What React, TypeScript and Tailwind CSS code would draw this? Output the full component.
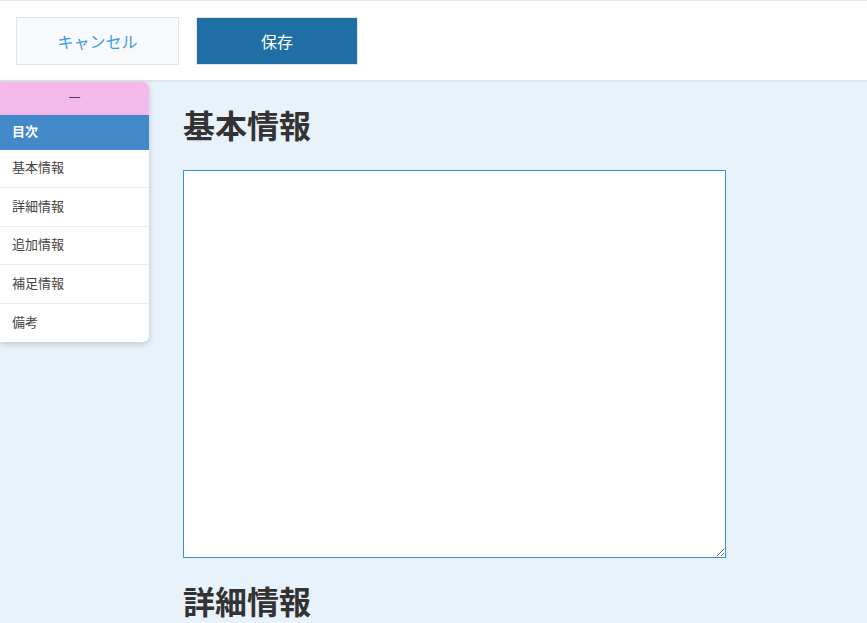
import React from "react";

const sections = ["基本情報", "詳細情報", "追加情報", "補足情報", "備考"];

export default function App() {
  return (
    <div
      className="relative h-[623px] w-[867px] overflow-hidden bg-[#e8f2fb]"
      style={{ fontFamily: '"Noto Sans CJK JP", "Noto Sans", sans-serif' }}
    >
      <header className="flex h-[82px] items-center gap-[17px] border-t border-b-2 border-t-[#e6e6e6] border-b-[#e0e4e8] bg-white px-4">
        <button className="h-[48px] w-[163px] border border-[#e1e5e9] bg-[#f7f9fb] text-[16px] text-[#3d9be0]">
          キャンセル
        </button>
        <button className="h-[48px] w-[162px] border border-[#e1e5e9] bg-[#1f6fa6] text-[16px] text-white">
          保存
        </button>
      </header>

      <nav className="absolute left-0 top-[82px] w-[149px] overflow-hidden rounded-r-md bg-white shadow-[0_2px_6px_rgba(0,0,0,0.18)]">
        <div className="flex h-[33px] items-center justify-center bg-[#f2b9ea] pb-[4px] font-['Liberation_Sans',sans-serif] text-[11px] leading-none text-[#222]">
          —
        </div>
        <div className="flex h-[35px] items-center bg-[#4389c9] px-3 pb-[3px] text-[13px] font-bold text-white">
          目次
        </div>
        <ul>
          {sections.map((s, i) => (
            <li
              key={s}
              className={`flex h-[38.4px] items-center px-3 pb-[3px] text-[13px] text-[#444] ${
                i < sections.length - 1 ? "border-b border-[#ececec]" : ""
              }`}
            >
              {s}
            </li>
          ))}
        </ul>
      </nav>

      <main className="pl-[183px] pt-[22px]">
        <h2 className="text-[32px] font-bold leading-[40px] text-[#333]">基本情報</h2>
        <textarea className="mt-[26px] block h-[388px] w-[543px] resize border border-[#3b8fd6] bg-white outline-none" />
        <h2 className="mt-[22px] text-[32px] font-bold leading-[40px] text-[#333]">詳細情報</h2>
      </main>
    </div>
  );
}
